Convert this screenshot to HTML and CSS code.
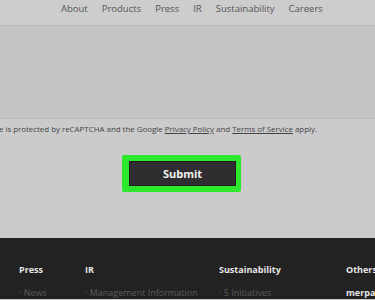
FILE: index.html
```html
<!DOCTYPE html>
<html lang="en">
<head>
  <meta charset="UTF-8">
  <meta name="viewport" content="width=device-width, initial-scale=1.0">
  <title>Contact</title>
  <link rel="stylesheet" href="styles.css">
</head>
<body>
  <div class="top-nav">
    <a href="#">About</a>
    <a href="#">Products</a>
    <a href="#">Press</a>
    <a href="#">IR</a>
    <a href="#">Sustainability</a>
    <a href="#">Careers</a>
  </div>

  <div class="form-area"></div>

  <div class="notice">
    <p>This site is protected by reCAPTCHA and the Google <a href="#">Privacy Policy</a> and <a href="#">Terms of Service</a> apply.</p>
  </div>

  <div class="submit-row">
    <button class="submit-btn">Submit</button>
  </div>

  <div class="footer">
    <div class="footer-col col-press">
      <div class="footer-title">Press</div>
      <a href="#">· News</a>
    </div>
    <div class="footer-col col-ir">
      <div class="footer-title">IR</div>
      <a href="#">· Management Information</a>
    </div>
    <div class="footer-col col-sus">
      <div class="footer-title">Sustainability</div>
      <a href="#">· 5 Initiatives</a>
    </div>
    <div class="footer-col col-others">
      <div class="footer-title">Others</div>
      <a href="#" class="brand">merpay</a>
    </div>
  </div>
</body>
</html>
```

FILE: styles.css
```css
body {
  margin: 0;
  font-family: 'Open Sans', 'Noto Sans', sans-serif;
  background-color: #cbcbcb;
  color: #333;
  overflow: hidden;
  height: 300px;
}
a {
  color: inherit;
  text-decoration: none;
}
.top-nav {
  height: 26px;
  box-sizing: border-box;
  display: flex;
  align-items: flex-start;
  padding: 2px 0 0 61px;
  gap: 14px;
  font-size: 9.5px;
  color: #555;
  background-color: #cdcdcd;
  border-bottom: 1px solid #b9b9b9;
}
.form-area {
  height: 92px;
  background-color: #c5c5c5;
  border-bottom: 1px solid #bcbcbc;
}
.notice {
  display: flex;
  justify-content: flex-end;
  padding-right: 58px;
  overflow: hidden;
  height: 36px;
}
.notice p {
  margin: 0;
  padding-top: 5px;
  white-space: nowrap;
  font-size: 7.9px;
  color: #444;
}
.notice a {
  text-decoration: underline;
}
.submit-row {
  height: 83px;
  padding-left: 122px;
}
.submit-btn {
  width: 119px;
  height: 37px;
  border: 6px solid #2ee82e;
  border-left-width: 7px;
  border-right-width: 5px;
  border-radius: 2px;
  background-color: #302d31;
  box-shadow: inset 0 0 0 1px #1e1c1f;
  color: #f2f2f2;
  font-family: 'Open Sans', sans-serif;
  font-weight: bold;
  font-size: 11px;
  padding: 0;
  cursor: pointer;
}
.footer {
  height: 36px;
  background-color: #222;
  display: flex;
  padding-top: 25px;
  padding-left: 19px;
  white-space: nowrap;
  overflow: hidden;
}
.footer-col {
  display: flex;
  flex-direction: column;
  flex-shrink: 0;
  gap: 10px;
  font-size: 9px;
}
.footer-title {
  color: #e6e6e6;
  font-weight: bold;
}
.footer-col a {
  color: #5a5a5a;
}
.col-press { width: 66px; }
.col-ir { width: 134px; }
.col-sus { width: 127px; }
.footer-col a.brand {
  color: #e6e6e6;
  font-weight: bold;
}
```
